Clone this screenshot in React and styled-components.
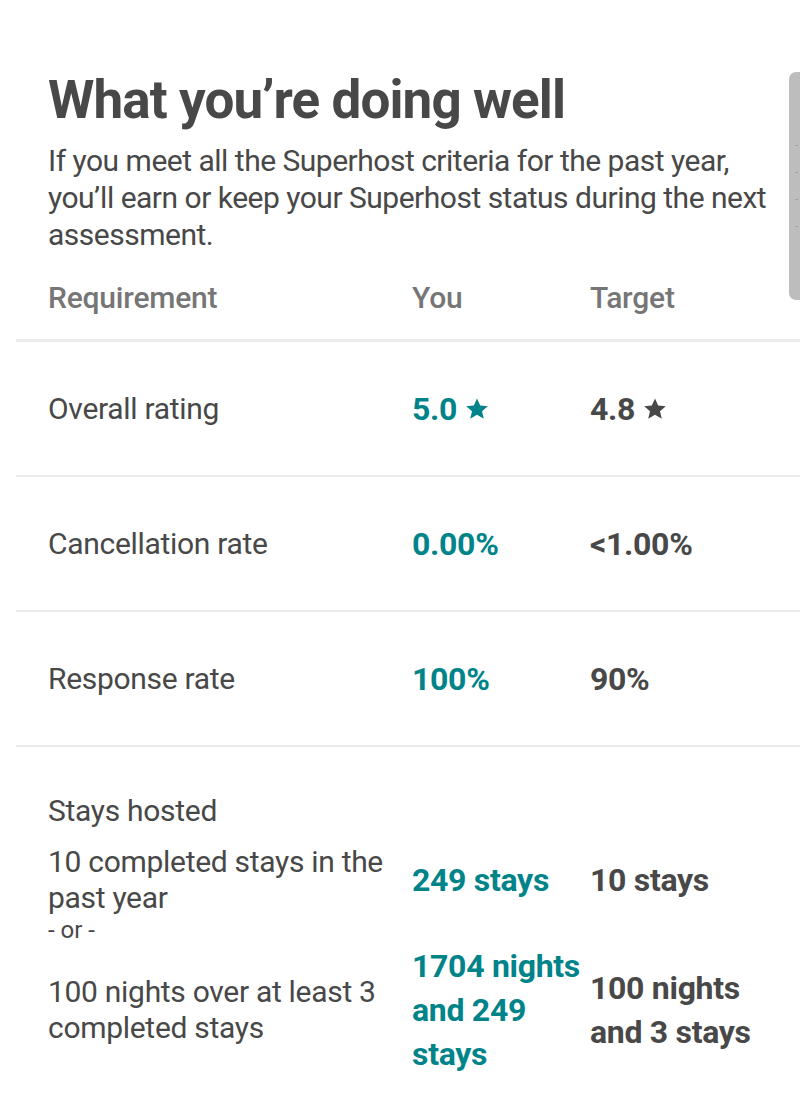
import React from "react";
import styled, { createGlobalStyle } from "styled-components";

const Global = createGlobalStyle`
  html, body {
    margin: 0;
    padding: 0;
    background: #ffffff;
  }
  body {
    font-family: Roboto, "Liberation Sans", sans-serif;
    color: #484848;
  }
`;

const TEAL = "#008489";

const rows = [
  { label: "Overall rating", you: "5.0", target: "4.8", star: true },
  { label: "Cancellation rate", you: "0.00%", target: "<1.00%" },
  { label: "Response rate", you: "100%", target: "90%" },
];

function Star({ color }) {
  return (
    <StarIcon viewBox="0 0 24 24" aria-hidden="true">
      <path
        fill={color}
        d="M12 1.5l3.2 7 7.6.7-5.8 5.1 1.8 7.5L12 17.8l-6.8 4 1.8-7.5-5.8-5.1 7.6-.7z"
      />
    </StarIcon>
  );
}

export default function App() {
  return (
    <Page>
      <Global />
      <Scroller>
        <Tick />
        <Tick />
        <Tick />
        <Tick />
      </Scroller>
      <Intro>
        <Title>What you’re doing well</Title>
        <Lead>
          If you meet all the Superhost criteria for the past year, you’ll earn
          or keep your Superhost status during the next assessment.
        </Lead>
      </Intro>

      <Table>
        <HeadRow>
          <HeadCell>Requirement</HeadCell>
          <HeadCell>You</HeadCell>
          <HeadCell>Target</HeadCell>
        </HeadRow>

        {rows.map((r) => (
          <Row key={r.label}>
            <Label>{r.label}</Label>
            <Value $accent>
              {r.you}
              {r.star && <Star color={TEAL} />}
            </Value>
            <Value>
              {r.target}
              {r.star && <Star color="#484848" />}
            </Value>
          </Row>
        ))}

        <StaysBlock>
          <Label>Stays hosted</Label>
          <SubRow>
            <Label>10 completed stays in the past year</Label>
            <Value $accent $tall>249 stays</Value>
            <Value $tall>10 stays</Value>
          </SubRow>
          <Or>- or -</Or>
          <SubRow>
            <Label>100 nights over at least 3 completed stays</Label>
            <Value $accent $tall>1704 nights and 249 stays</Value>
            <Value $tall>100 nights and 3 stays</Value>
          </SubRow>
        </StaysBlock>
      </Table>
    </Page>
  );
}

const Page = styled.div`
  position: relative;
  width: 800px;
  min-height: 1113px;
  overflow: hidden;
  padding-top: 70px;
  box-sizing: border-box;
`;

const Scroller = styled.div`
  position: absolute;
  top: 72px;
  right: -6px;
  width: 17px;
  height: 228px;
  border-radius: 7px;
  background: #bdbdbd;
  display: flex;
  flex-direction: column;
  align-items: flex-start;
  justify-content: center;
  gap: 26px;
  padding-left: 6px;
  box-sizing: border-box;
`;

const Tick = styled.span`
  width: 3px;
  height: 1px;
  background: #a0a0a0;
`;

const Intro = styled.div`
  padding: 0 16px 0 48px;
`;

const Title = styled.h1`
  margin: 0;
  font-size: 53px;
  line-height: 60px;
  font-weight: 700;
  letter-spacing: -0.9px;
  color: #484848;
`;

const Lead = styled.p`
  margin: 12px 0 0;
  font-size: 30px;
  line-height: 37px;
  font-weight: 400;
  letter-spacing: -0.5px;
  color: #484848;
`;

const Table = styled.div`
  margin-left: 16px;
  margin-top: 27px;
`;

const grid = `
  display: grid;
  grid-template-columns: 364px 178px 178px;
  align-items: center;
`;

const HeadRow = styled.div`
  ${grid}
  padding-left: 32px;
  height: 59px;
  border-bottom: 3px solid #ebebeb;
`;

const HeadCell = styled.div`
  font-size: 30px;
  line-height: 36px;
  font-weight: 500;
  color: #767676;
  letter-spacing: -0.2px;
  align-self: start;
`;

const Row = styled.div`
  ${grid}
  padding-left: 32px;
  height: 133px;
  border-bottom: 2px solid #ebebeb;
`;

const Label = styled.div`
  font-size: 30px;
  line-height: 36px;
  font-weight: 400;
  color: #484848;
  letter-spacing: -0.3px;
  padding-right: 16px;
`;

const Value = styled.div`
  display: flex;
  align-items: center;
  gap: 8px;
  font-size: 32px;
  line-height: ${(p) => (p.$tall ? "44px" : "36px")};
  font-weight: 700;
  letter-spacing: -0.3px;
  color: ${(p) => (p.$accent ? TEAL : "#484848")};
`;

const StarIcon = styled.svg`
  width: 24px;
  height: 24px;
`;

const StaysBlock = styled.div`
  padding: 46px 0 30px 32px;
  display: flex;
  flex-direction: column;

  & > ${Label} {
    margin-bottom: 15px;
  }
`;

const SubRow = styled.div`
  ${grid}
`;

const Or = styled.div`
  font-size: 24px;
  line-height: 28px;
  color: #484848;
`;
